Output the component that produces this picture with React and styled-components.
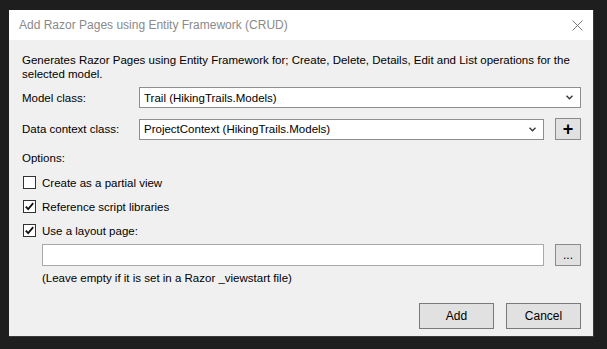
import styled, { createGlobalStyle } from 'styled-components'

const Global = createGlobalStyle`
  html, body {
    margin: 0;
    padding: 0;
    background: #1e1e1e;
  }
  body {
    font-family: 'Liberation Sans', Arial, sans-serif;
    font-size: 11.5px;
    color: #000;
  }
`

const Page = styled.div`
  width: 607px;
  height: 349px;
  padding: 10px 0 0 9px;
  box-sizing: border-box;
`

const Dialog = styled.div`
  width: 585px;
  background: #f0f0f0;
  border-right: 1px solid #3a3a3a;
  border-bottom: 1px solid #3a3a3a;
  box-sizing: border-box;
`

const TitleBar = styled.div`
  height: 30px;
  background: #fff;
  display: flex;
  align-items: center;
  justify-content: space-between;
  padding: 0 10px 0 10px;
  color: #8a8a8a;
  font-size: 12px;
`

const Body = styled.div`
  padding: 13px 12px 7px 13px;
  display: flex;
  flex-direction: column;
`

const Text = styled.div`
  line-height: 14px;
  margin-top: ${(p) => p.$mt || 0}px;
  padding-left: ${(p) => p.$indent || 0}px;
`

const FormRow = styled.div`
  display: grid;
  grid-template-columns: 106px 1fr ${(p) => (p.$extra ? '26px' : '')};
  column-gap: 11px;
  align-items: center;
  margin-top: ${(p) => p.$mt || 0}px;
`

const Select = styled.div`
  height: 21px;
  background: #fff;
  border: 1px solid #8e8e8e;
  box-sizing: border-box;
  display: flex;
  align-items: center;
  justify-content: space-between;
  padding: 0 7px 0 4px;
`

const SideButton = styled.div`
  height: 22px;
  background: #e1e1e1;
  border: 1px solid #8a8a8a;
  box-sizing: border-box;
  display: flex;
  align-items: center;
  justify-content: center;
  font-weight: ${(p) => (p.$bold ? 700 : 400)};
  font-size: ${(p) => (p.$bold ? 18 : 12)}px;
  line-height: 1;
`

const CheckList = styled.div`
  display: flex;
  flex-direction: column;
  gap: 9px;
  margin-top: 10px;
`

const CheckRow = styled.label`
  display: flex;
  align-items: center;
  gap: 6px;
  height: 15px;
`

const Box = styled.span`
  width: 13px;
  height: 13px;
  border: 1px solid #333;
  background: #fff;
  box-sizing: border-box;
  display: flex;
  align-items: center;
  justify-content: center;
  margin-left: 1px;
`

const InputRow = styled.div`
  display: grid;
  grid-template-columns: 1fr 26px;
  column-gap: 11px;
  padding-left: 20px;
  margin-top: 6px;
`

const Input = styled.div`
  height: 22px;
  background: #fff;
  border: 1px solid #a9a9a9;
  box-sizing: border-box;
`

const Footer = styled.div`
  display: flex;
  justify-content: flex-end;
  gap: 12px;
  margin-top: 18px;
`

const Button = styled.div`
  width: 75px;
  height: 26px;
  background: #e1e1e1;
  border: 1px solid #7a7a7a;
  box-sizing: border-box;
  display: flex;
  align-items: center;
  justify-content: center;
  font-size: 12px;
`

const Close = () => (
  <svg width="11" height="11" viewBox="0 0 11 11">
    <path d="M0.5 0.5 L10.5 10.5 M10.5 0.5 L0.5 10.5" stroke="#7a7a7a" strokeWidth="1" />
  </svg>
)

const Chevron = () => (
  <svg width="7" height="5" viewBox="0 0 7 5">
    <path d="M0.5 0.8 L3.5 3.8 L6.5 0.8" stroke="#333" strokeWidth="1.3" fill="none" />
  </svg>
)

const Tick = () => (
  <svg width="9" height="9" viewBox="0 0 9 9">
    <path d="M0.8 4.6 L3.2 7.2 L8.2 1.2" stroke="#111" strokeWidth="1.8" fill="none" />
  </svg>
)

function Check({ checked, children }) {
  return (
    <CheckRow>
      <Box>{checked && <Tick />}</Box>
      {children}
    </CheckRow>
  )
}

export default function App() {
  return (
    <Page>
      <Global />
      <Dialog>
        <TitleBar>
          <span>Add Razor Pages using Entity Framework (CRUD)</span>
          <Close />
        </TitleBar>
        <Body>
          <Text>
            Generates Razor Pages using Entity Framework for; Create, Delete, Details, Edit and List operations for the
            selected model.
          </Text>
          <FormRow $mt={6}>
            <span>Model class:</span>
            <Select>
              <span>Trail (HikingTrails.Models)</span>
              <Chevron />
            </Select>
          </FormRow>
          <FormRow $mt={10} $extra>
            <span>Data context class:</span>
            <Select>
              <span>ProjectContext (HikingTrails.Models)</span>
              <Chevron />
            </Select>
            <SideButton $bold>+</SideButton>
          </FormRow>
          <Text $mt={11}>Options:</Text>
          <CheckList>
            <Check>Create as a partial view</Check>
            <Check checked>Reference script libraries</Check>
            <Check checked>Use a layout page:</Check>
          </CheckList>
          <InputRow>
            <Input />
            <SideButton>...</SideButton>
          </InputRow>
          <Text $mt={5} $indent={20}>
            (Leave empty if it is set in a Razor _viewstart file)
          </Text>
          <Footer>
            <Button>Add</Button>
            <Button>Cancel</Button>
          </Footer>
        </Body>
      </Dialog>
    </Page>
  )
}
